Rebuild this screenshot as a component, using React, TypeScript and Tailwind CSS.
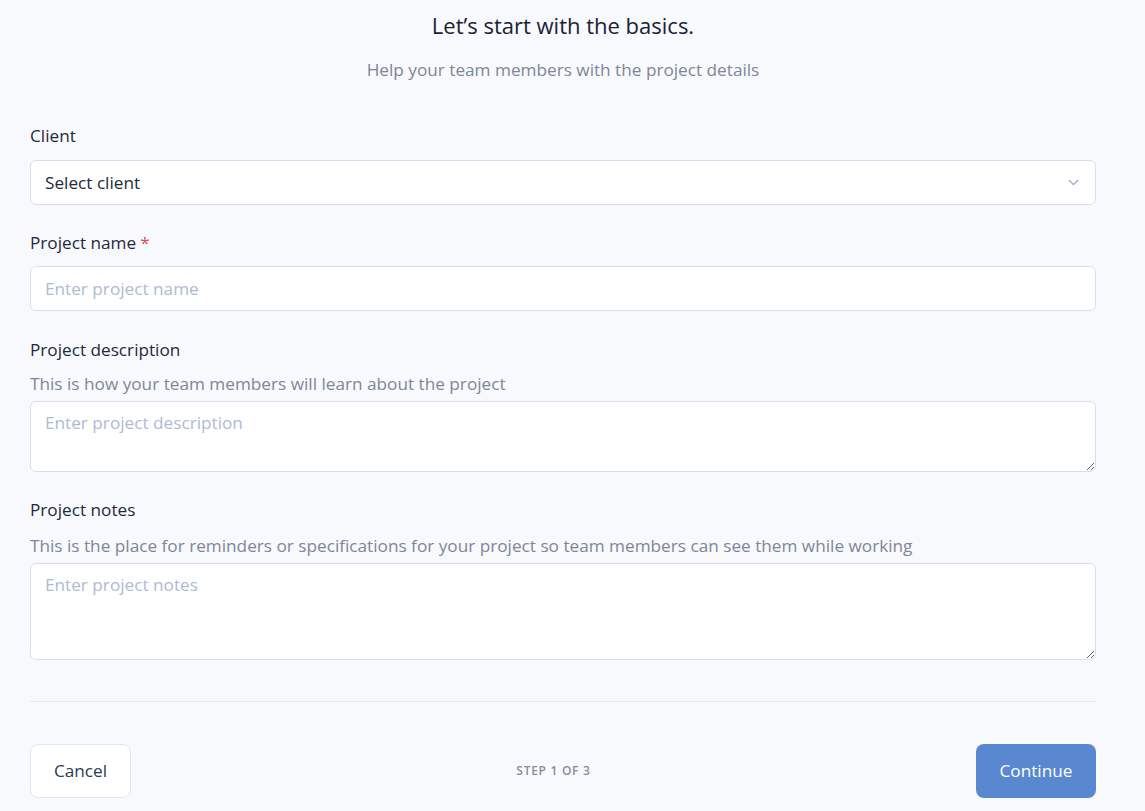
import { ChevronDown } from "lucide-react";

const font = { fontFamily: '"Open Sans", "Noto Sans", sans-serif' };

function Label({ children, required }: { children: string; required?: boolean }) {
  return (
    <label className="block text-[17.2px] leading-6 text-[#1e293b]">
      {children}
      {required ? <span className="ml-1 text-[#e5484d]">*</span> : null}
    </label>
  );
}

export default function App() {
  return (
    <div className="min-h-[811px] bg-[#f8f9fc]" style={font}>
      <div className="ml-[30px] w-[1066px] pt-[11px]">
        <h1 className="text-center text-[22px] font-medium leading-7 text-[#1a2233]">
          Let’s start with the basics.
        </h1>
        <p className="mt-[19px] text-center text-[17.2px] leading-6 text-[#7d8799]">
          Help your team members with the project details
        </p>

        <div className="mt-[42px]">
          <Label>Client</Label>
          <button className="mt-[12px] flex h-[45px] w-full items-center justify-between rounded-md border border-[#d6dff0] bg-white pl-[14px] pr-[13px] text-left text-[17.2px] text-[#1e293b]">
            <span>Select client</span>
            <ChevronDown className="h-[17px] w-[17px] text-[#8fa0c2]" strokeWidth={1.75} />
          </button>
        </div>

        <div className="mt-[26px]">
          <Label required>Project name</Label>
          <input
            placeholder="Enter project name"
            className="mt-[11px] block h-[45px] w-full rounded-md border border-[#d6dff0] bg-white px-[14px] text-[17.2px] text-[#1e293b] outline-none placeholder:text-[#aebbd3]"
          />
        </div>

        <div className="mt-[27px]">
          <Label>Project description</Label>
          <p className="mt-[10px] text-[17.2px] leading-6 text-[#7d8799]">
            This is how your team members will learn about the project
          </p>
          <textarea
            placeholder="Enter project description"
            className="mt-[5px] block h-[71px] w-full rounded-md border border-[#d6dff0] bg-white px-[14px] py-[9px] text-[17.2px] leading-6 text-[#1e293b] outline-none placeholder:text-[#aebbd3]"
          />
        </div>

        <div className="mt-[26px]">
          <Label>Project notes</Label>
          <p className="mt-[12px] text-[17.2px] leading-6 text-[#7d8799]">
            This is the place for reminders or specifications for your project so team members can see them while working
          </p>
          <textarea
            placeholder="Enter project notes"
            className="mt-[5px] block h-[97px] w-full rounded-md border border-[#d6dff0] bg-white px-[14px] py-[9px] text-[17.2px] leading-6 text-[#1e293b] outline-none placeholder:text-[#aebbd3]"
          />
        </div>

        <div className="mt-[41px] h-px bg-[#e4e8f1]" />

        <div className="mt-[42px] flex items-center justify-between">
          <button className="h-[54px] w-[101px] rounded-lg border border-[#e1e7f2] bg-white text-[17.2px] text-[#2c3a52]">
            Cancel
          </button>
          <span className="text-[12px] font-semibold uppercase tracking-[0.06em] text-[#858e9e]">
            Step 1 of 3
          </span>
          <button className="h-[54px] w-[120px] rounded-lg bg-[#5a88d0] text-[17.2px] text-white">
            Continue
          </button>
        </div>
      </div>
    </div>
  );
}
